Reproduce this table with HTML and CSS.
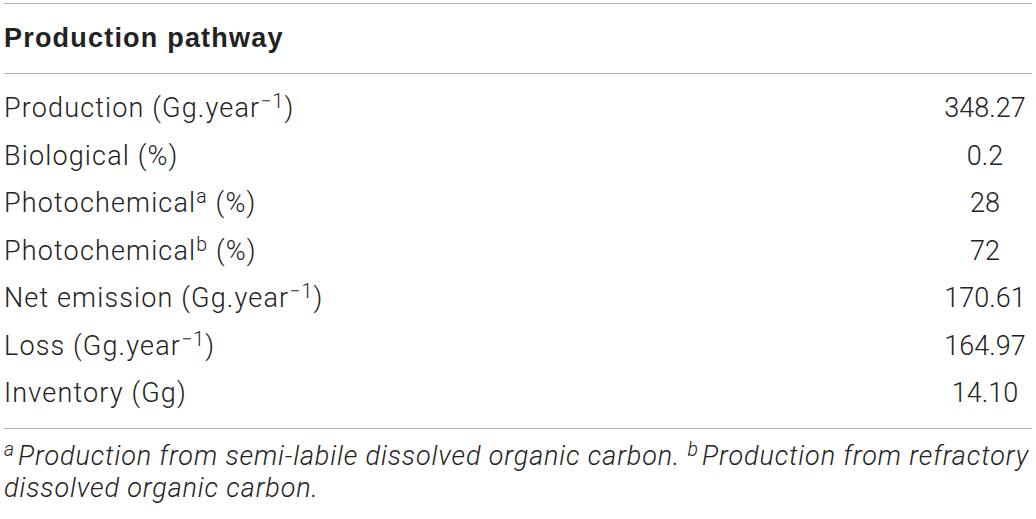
FILE: index.html
```html
<!DOCTYPE html>
<html lang="en">
<head>
<meta charset="utf-8">
<title>Production pathway</title>
<link rel="stylesheet" href="styles.css">
</head>
<body>
<div class="wrap">
  <table class="data">
    <thead>
      <tr><th class="label-head">Production pathway</th><th class="value-head"></th></tr>
    </thead>
    <tbody>
      <tr class="first"><td class="label">Production (Gg.year<sup>−1</sup>)</td><td class="value">348.27</td></tr>
      <tr><td class="label">Biological (%)</td><td class="value">0.2</td></tr>
      <tr><td class="label">Photochemical<sup class="letter">a</sup> (%)</td><td class="value">28</td></tr>
      <tr><td class="label">Photochemical<sup class="letter">b</sup> (%)</td><td class="value">72</td></tr>
      <tr><td class="label">Net emission (Gg.year<sup>−1</sup>)</td><td class="value">170.61</td></tr>
      <tr><td class="label">Loss (Gg.year<sup>−1</sup>)</td><td class="value">164.97</td></tr>
      <tr class="last"><td class="label">Inventory (Gg)</td><td class="value">14.10</td></tr>
    </tbody>
  </table>
  <p class="note"><sup class="mark">a</sup><span class="fn">Production from semi-labile dissolved organic carbon.</span> <sup class="mark">b</sup><span class="fn">Production from refractory dissolved organic carbon.</span></p>
</div>
</body>
</html>
```

FILE: styles.css
```css
html, body {
  margin: 0;
  padding: 0;
  background: #ffffff;
}

.wrap {
  padding: 3px 4px 0 4px;
  font-family: Roboto, "Liberation Sans", Arial, sans-serif;
  font-weight: 300;
  color: #222222;
  font-size: 27px;
}

.data {
  width: 100%;
  border-collapse: collapse;
  border-top: 1px solid #b5b5b5;
  border-bottom: 1px solid #b5b5b5;
}

.data thead tr {
  height: 70px;
  border-bottom: 1px solid #b5b5b5;
}

.data th {
  padding: 0;
  text-align: left;
  font-family: "Liberation Sans", Arial, sans-serif;
  font-weight: 700;
  letter-spacing: 1.2px;
  color: #222;
  vertical-align: middle;
}

.data td {
  padding: 0;
  line-height: 47.5px;
}

.data tr.first td {
  padding-top: 11px;
}

.data tr.last td {
  padding-bottom: 10.5px;
}

.label {
  text-align: left;
  letter-spacing: 1.15px;
}

.value {
  width: 94px;
  text-align: center;
}

.value-head {
  width: 94px;
}

sup {
  font-size: 0.72em;
  line-height: 0;
  vertical-align: 0.45em;
}

.note {
  margin: 11px 0 0 0;
  font-style: italic;
  line-height: 32px;
  letter-spacing: 0.87px;
}

.note .mark {
  display: inline-block;
  line-height: 1;
  margin-right: 4px;
  letter-spacing: 0;
}
```
